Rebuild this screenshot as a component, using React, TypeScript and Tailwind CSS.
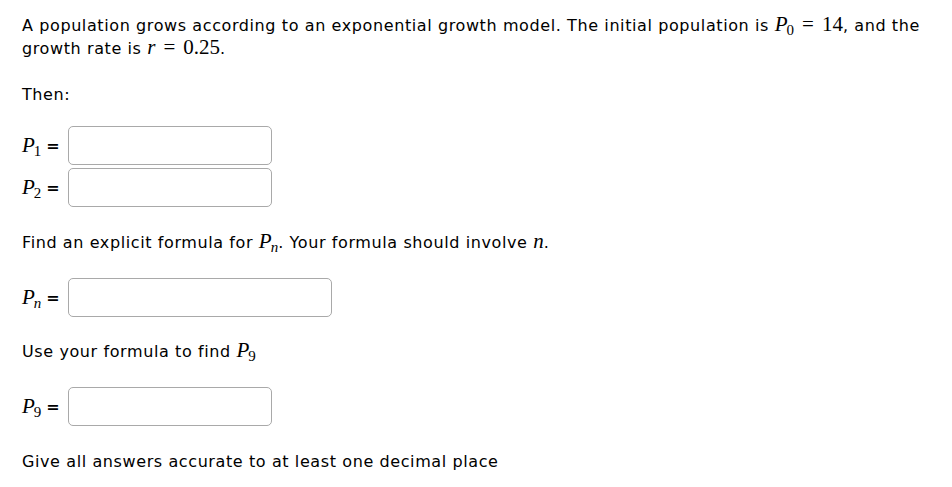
import React from 'react';

const MathVar = ({ v, sub }: { v: string; sub?: string }) => (
  <span className="font-['Liberation_Serif',serif] text-[21px] leading-none whitespace-nowrap tracking-normal">
    <span className="italic">{v}</span>
    {sub && (
      <span className={`text-[15px] relative top-[4px] ${/[a-z]/.test(sub) ? 'italic' : ''} -ml-[1px]`}>{sub}</span>
    )}
  </span>
);

const Serif = ({ children }: { children: React.ReactNode }) => (
  <span className="font-['Liberation_Serif',serif] text-[21px] leading-none whitespace-nowrap tracking-normal">{children}</span>
);

const Eq = () => <span className="mx-[8px]">=</span>;

const AnswerRow = ({ sub, wide }: { sub: string; wide?: boolean }) => (
  <div className="flex items-center h-[39px]">
    <div className="w-[46px] flex items-center">
      <MathVar v="P" sub={sub} />
      <span className="ml-[5px] text-[16px] font-bold">=</span>
    </div>
    <input
      type="text"
      className={`${wide ? 'w-[264px]' : 'w-[204px]'} h-[39px] border border-[#a9a9a9] rounded-[5px] bg-white outline-none`}
    />
  </div>
);

export default function App() {
  return (
    <div className="min-h-screen bg-white text-black font-['DejaVu_Sans',sans-serif] text-[16px] leading-[22px] tracking-[0.6px] pl-[22px] pt-[14px]">
      <p>
        A population grows according to an exponential growth model. The initial population is{' '}
        <MathVar v="P" sub="0" /><Serif><Eq />14</Serif>, and the growth rate is{' '}
        <Serif><span className="italic">r</span><Eq />0.25</Serif>.
      </p>
      <p className="mt-[24px]">Then:</p>
      <div className="mt-[20px] flex flex-col gap-[3px]">
        <AnswerRow sub="1" />
        <AnswerRow sub="2" />
      </div>
      <p className="mt-[24px]">
        Find an explicit formula for <MathVar v="P" sub="n" />. Your formula should involve{' '}
        <Serif><span className="italic">n</span></Serif>.
      </p>
      <div className="mt-[24px]">
        <AnswerRow sub="n" wide />
      </div>
      <p className="mt-[23px]">
        Use your formula to find <MathVar v="P" sub="9" />
      </p>
      <div className="mt-[24px]">
        <AnswerRow sub="9" />
      </div>
      <p className="mt-[25px]">Give all answers accurate to at least one decimal place</p>
    </div>
  );
}
